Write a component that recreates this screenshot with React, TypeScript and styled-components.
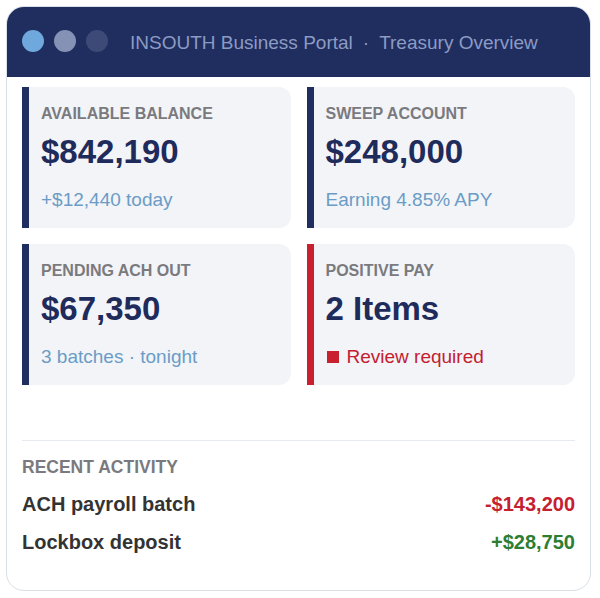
import React from 'react'
import styled, { createGlobalStyle } from 'styled-components'

const GlobalStyle = createGlobalStyle`
  body {
    margin: 0;
    padding: 6px;
    background: #ffffff;
    font-family: "Liberation Sans", Arial, sans-serif;
  }
`

type Tone = 'navy' | 'red'

interface Tile {
  label: string
  value: string
  note: string
  tone: Tone
  alert?: boolean
}

const tiles: Tile[] = [
  { label: 'AVAILABLE BALANCE', value: '$842,190', note: '+$12,440 today', tone: 'navy' },
  { label: 'SWEEP ACCOUNT', value: '$248,000', note: 'Earning 4.85% APY', tone: 'navy' },
  { label: 'PENDING ACH OUT', value: '$67,350', note: '3 batches · tonight', tone: 'navy' },
  { label: 'POSITIVE PAY', value: '2 Items', note: 'Review required', tone: 'red', alert: true },
]

const activity = [
  { name: 'ACH payroll batch', amount: '-$143,200', positive: false },
  { name: 'Lockbox deposit', amount: '+$28,750', positive: true },
]

const App: React.FC = () => {
  return (
    <>
      <GlobalStyle />
      <Window>
        <TitleBar>
          <Dots>
            <Dot color='#6fa8dc' />
            <Dot color='#8592b6' />
            <Dot color='#3d4a77' />
          </Dots>
          <Title>
            INSOUTH Business Portal<Sep>·</Sep>Treasury Overview
          </Title>
        </TitleBar>
        <Body>
          <Grid>
            {tiles.map((tile) => (
              <Card key={tile.label} tone={tile.tone}>
                <Label>{tile.label}</Label>
                <Value>{tile.value}</Value>
                <Note alert={tile.alert}>
                  {tile.alert && <Square />}
                  {tile.note}
                </Note>
              </Card>
            ))}
          </Grid>
          <Activity>
            <ActivityLabel>RECENT ACTIVITY</ActivityLabel>
            {activity.map((row) => (
              <Row key={row.name}>
                <span>{row.name}</span>
                <Amount positive={row.positive}>{row.amount}</Amount>
              </Row>
            ))}
          </Activity>
        </Body>
      </Window>
    </>
  )
}

const Window = styled.div`
width: 585px;
height: 585px;
box-sizing: border-box;
border: 1px solid #d9dfe7;
border-radius: 18px;
overflow: hidden;
background: #ffffff;
display: flex;
flex-direction: column;`

const TitleBar = styled.div`
height: 70px;
background: #1f2d5f;
display: flex;
align-items: center;
padding: 0 0 0 15px;
flex-shrink: 0;`

const Dots = styled.div`
display: flex;
gap: 10px;
margin-top: -3px;`

const Dot = styled.span<{ color: string }>`
width: 22px;
height: 22px;
border-radius: 50%;
background: ${(p) => p.color};`

const Title = styled.div`
margin-left: 22px;
font-size: 19px;
color: #8c9bc3;
white-space: nowrap;
margin-top: 2px;`

const Sep = styled.span`
margin: 0 10px;`

const Body = styled.div`
padding: 10px 15px 0 15px;
display: flex;
flex-direction: column;`

const Grid = styled.div`
display: grid;
grid-template-columns: 1fr 1fr;
gap: 16px;`

const Card = styled.div<{ tone: Tone }>`
background: #f2f4f8;
border-left: 7px solid ${(p) => (p.tone === 'red' ? '#c8202f' : '#1f2d5f')};
border-radius: 0 12px 12px 0;
height: 141px;
box-sizing: border-box;
padding: 17px 12px 0 12px;
display: flex;
flex-direction: column;`

const Label = styled.div`
font-size: 16px;
line-height: 20px;
font-weight: 700;
color: #7a7a7e;`

const Value = styled.div`
margin-top: 9px;
font-size: 33px;
line-height: 38px;
font-weight: 700;
color: #1e2b5b;`

const Note = styled.div<{ alert?: boolean }>`
margin-top: 17px;
font-size: 19px;
line-height: 24px;
color: ${(p) => (p.alert ? '#c42030' : '#6b9cc6')};
display: flex;
align-items: center;`

const Square = styled.span`
width: 12px;
height: 12px;
background: #c8202f;
margin-right: 8px;
margin-left: 1px;`

const Activity = styled.div`
margin-top: 55px;
border-top: 1px solid #e6e9ee;
padding-top: 15px;
display: flex;
flex-direction: column;`

const ActivityLabel = styled.div`
font-size: 17.5px;
line-height: 22px;
font-weight: 700;
color: #7a7a7e;
margin-bottom: 14px;`

const Row = styled.div`
display: flex;
justify-content: space-between;
font-size: 20px;
line-height: 24px;
font-weight: 700;
color: #333333;
margin-bottom: 14px;`

const Amount = styled.span<{ positive: boolean }>`
color: ${(p) => (p.positive ? '#2e7d32' : '#c42030')};`

export default App
